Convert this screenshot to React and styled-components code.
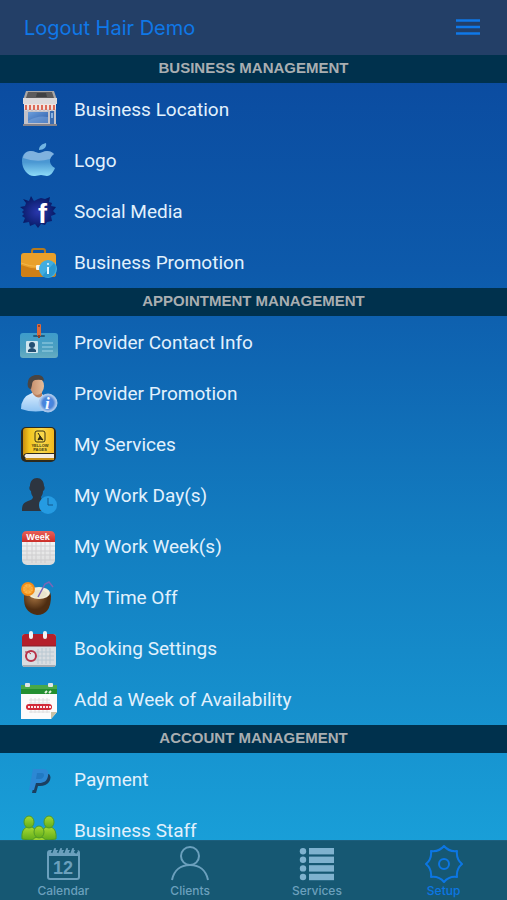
import React from "react";
import styled, { createGlobalStyle } from "styled-components";

const GlobalStyle = createGlobalStyle`
  * {
    box-sizing: border-box;
  }

  body {
    margin: 0;
    font-family: Inter, "Liberation Sans", sans-serif;
  }
`;

const Screen = styled.div`
  display: flex;
  flex-direction: column;
  height: 100vh;
  background: linear-gradient(#0a469c, #0d5aab 30%, #1380c2 62%, #199fd8 94%);
`;

const Header = styled.header`
  display: flex;
  align-items: center;
  justify-content: space-between;
  flex-shrink: 0;
  height: 55px;
  padding: 0 24px;
  background-color: #233f67;
`;

const HeaderButton = styled.button`
  display: flex;
  padding: 0;
  border: none;
  background: none;
  color: #0f78e8;
  font-family: inherit;
  font-size: 20px;
  line-height: 24px;
  cursor: pointer;
`;

const MenuIcon = styled.svg`
  width: 30px;
  height: 24px;
`;

const Main = styled.main`
  flex: 1;
  min-height: 0;
  overflow-y: auto;
  scrollbar-width: none;
`;

const SectionTitle = styled.h2`
  margin: 0;
  padding-bottom: 2px;
  background-color: #00314d;
  color: #a9aeb1;
  font-family: "Liberation Sans", sans-serif;
  font-size: 15px;
  font-weight: 700;
  line-height: 26px;
  text-align: center;
`;

const List = styled.ul`
  margin: 0;
  padding: 1px 0 0;
  list-style: none;
`;

const Row = styled.a`
  display: flex;
  align-items: center;
  gap: 16px;
  height: 51px;
  padding: 0 20px;
  color: #e2f1fd;
  font-family: Roboto, "Liberation Sans", sans-serif;
  font-size: 19px;
  line-height: 24px;
  text-decoration: none;
`;

const RowIcon = styled.svg`
  flex-shrink: 0;
  width: 38px;
  height: 38px;
`;

const TabBar = styled.nav`
  display: grid;
  grid-template-columns: repeat(4, 1fr);
  flex-shrink: 0;
  height: 60px;
  border-top: 1px solid #1c5f7e;
  background-color: #165873;
`;

const Tab = styled.a`
  display: flex;
  flex-direction: column;
  align-items: center;
  padding-top: 4px;
  color: ${(props) => (props.$active ? "#0c76e4" : "#6ba0bd")};
  font-size: 12px;
  font-weight: 500;
  line-height: 14px;
  text-decoration: none;
`;

const TabIcon = styled.svg`
  width: 38px;
  height: 38px;
  margin-bottom: 1px;
`;

const StoreIcon = () => (
  <RowIcon viewBox="0 0 38 38" aria-hidden="true">
    <defs>
      <linearGradient id="glass" x1="0" y1="0" x2="1" y2="1">
        <stop offset="0" stopColor="#6c9fdc" />
        <stop offset="1" stopColor="#2a5aa8" />
      </linearGradient>
    </defs>
    <path d="M6 0h28l3 9H3z" fill="#a9a6a6" />
    <path d="M8 1h24l2 6H6z" fill="#5c5b5d" />
    <path d="M17 2h9l1 4H16z" fill="#3f4043" />
    <path d="M3 7h34v6H3z" fill="#dcd9db" />
    <path d="M4 13h32v22H4z" fill="#c3c2c9" />
    <path d="M8 21h20v11H8z" fill="url(#glass)" />
    <path d="M8 30q9-6 20-4v6H8z" fill="#7ea9df" opacity=".5" />
    <path d="M30 20h4v14h-4z" fill="#3a6cb0" />
    <path d="M31 22h2v5h-2z" fill="#87b2e2" />
    <path d="M4 13h32v5l-2 2-2-2-2 2-2-2-2 2-2-2-2 2-2-2-2 2-2-2-2 2-2-2-2 2-2-2-2 2-2-2z" fill="#f1e3df" />
    <path d="M6 14v5M10 14v5M14 14v5M18 14v5M22 14v5M26 14v5M30 14v5M34 14v5" stroke="#dc6a58" strokeWidth="2" />
    <path d="M3 33h34v2H3z" fill="#85838b" />
  </RowIcon>
);

const AppleIcon = () => (
  <RowIcon viewBox="0 0 38 38" aria-hidden="true">
    <defs>
      <linearGradient id="apple" x1="0" y1="0" x2="0" y2="1">
        <stop offset="0" stopColor="#4d91cf" />
        <stop offset=".45" stopColor="#4b98d3" />
        <stop offset="1" stopColor="#8edcf8" />
      </linearGradient>
    </defs>
    <path
      d="M19 11c3 0 5-2 8-2 3 0 5 1 7 3-6 4-5 11 1 14-2 5-5 8-8 8-2 0-4-1-6-1s-4 1-6 1C9 35 2 28 2 19 2 12 6 9 11 9c3 0 6 2 8 2z"
      fill="url(#apple)"
    />
    <path d="M3 16c1-5 4-7 8-7 3 0 6 2 8 2s5-2 8-2 5 1 7 3q-3 2-4 5-13 4-27-1z" fill="#9bc2e6" opacity=".65" />
    <path d="M19 8c0-4 3-6 7-7 1 4-2 7-7 7z" fill="#72b5e3" />
  </RowIcon>
);

const FacebookIcon = () => (
  <RowIcon viewBox="0 0 38 38" aria-hidden="true">
    <defs>
      <radialGradient id="splash">
        <stop offset="0" stopColor="#2a37ad" />
        <stop offset="1" stopColor="#071b66" />
      </radialGradient>
    </defs>
    <path
      d="M11 3l3 5 4-2 3-1 4 1 5-2-1 5 3 1-1 3 5 1-3 4 3 3-5 2 1 5-5 1-2 3-4-1-3 4-3-4-5 2-1-4-6 1 2-5-3-2 2-2-2-2 2-2-4-3 5-1 1-3-3-4 6 2z"
      fill="url(#splash)"
    />
    <text x="18" y="30" fill="#fff" fontFamily="Liberation Sans, sans-serif" fontSize="27" fontWeight="700">
      f
    </text>
  </RowIcon>
);

const BriefcaseIcon = () => (
  <RowIcon viewBox="0 0 38 38" aria-hidden="true">
    <path d="M12 10V7q0-2 2-2h9q2 0 2 2v3" fill="none" stroke="#b67a1d" strokeWidth="2" />
    <rect x="1" y="9" width="35" height="24" rx="3" fill="#e9a02a" />
    <path d="M1 21q17 7 35 0v9q0 3-3 3H4q-3 0-3-3z" fill="#cf7f16" />
    <path d="M1 19q17 7 35 0" stroke="#f5b648" fill="none" />
    <rect x="16" y="21" width="6" height="5" rx="1" fill="#f7f4ea" />
    <circle cx="28" cy="25" r="9" fill="#41ade0" />
    <path d="M22 32a9 9 0 0 0 12-13z" fill="#2b98d1" />
    <path d="M28 23v7" stroke="#e7f6ff" strokeWidth="2" />
    <circle cx="28" cy="20" r="1" fill="#e7f6ff" />
  </RowIcon>
);

const BadgeIcon = () => (
  <RowIcon viewBox="0 0 38 38" aria-hidden="true">
    <defs>
      <linearGradient id="badge" x1="0" y1="0" x2="0" y2="1">
        <stop offset="0" stopColor="#3d9ccb" />
        <stop offset=".6" stopColor="#4c9fc0" />
        <stop offset="1" stopColor="#67adc2" />
      </linearGradient>
    </defs>
    <rect x="0" y="9" width="38" height="25" rx="3" fill="url(#badge)" />
    <rect x="13" y="11" width="12" height="2" rx="1" fill="#1d5d83" />
    <rect x="17" y="0" width="4" height="12" rx="1" fill="#dc6a3b" />
    <circle cx="19" cy="2" r="1" fill="#7c3a2b" />
    <path d="M18 11h2v3h-2z" fill="#8c3d25" />
    <rect x="6" y="17" width="12" height="12" rx="1" fill="#cfe5ef" />
    <circle cx="12" cy="21" r="3" fill="#234e72" />
    <path d="M8 28v-2q4-4 8 0v2z" fill="#234e72" />
    <path d="M22 19h11M22 23h11M22 27h11" stroke="#9fd3e6" strokeWidth="1" />
  </RowIcon>
);

const PersonInfoIcon = () => (
  <RowIcon viewBox="0 0 38 38" aria-hidden="true">
    <defs>
      <linearGradient id="shirt" x1="0" y1="0" x2="0" y2="1">
        <stop offset="0" stopColor="#d9ecfd" />
        <stop offset="1" stopColor="#8fc3f3" />
      </linearGradient>
      <linearGradient id="face">
        <stop offset="0" stopColor="#c58e6b" />
        <stop offset="1" stopColor="#e6bd9a" />
      </linearGradient>
      <radialGradient id="info">
        <stop offset="0" stopColor="#3f85ee" />
        <stop offset=".6" stopColor="#4c85d8" />
        <stop offset="1" stopColor="#c5d9f2" />
      </radialGradient>
    </defs>
    <path d="M1 34q0-12 11-16h8q10 4 10 16-14 5-29 0z" fill="url(#shirt)" />
    <path d="M12 15h10v6q-4 4-9-2z" fill="#b77f5e" />
    <ellipse cx="17" cy="11" rx="7" ry="9" fill="url(#face)" />
    <path d="M8 12Q6 2 15 0q9-1 9 6-3-2-9-1-3 1-3 5l-1 4q-2 0-3-2z" fill="#4a4542" />
    <circle cx="28" cy="28" r="9" fill="url(#info)" stroke="#a9c7ec" />
    <text x="25" y="34" fill="#f3f9ff" fontFamily="Liberation Serif, serif" fontSize="17" fontStyle="italic" fontWeight="700">
      i
    </text>
  </RowIcon>
);

const YellowPagesIcon = () => (
  <RowIcon viewBox="0 0 38 38" aria-hidden="true">
    <defs>
      <linearGradient id="book">
        <stop offset="0" stopColor="#c98f10" />
        <stop offset=".2" stopColor="#f3c51e" />
        <stop offset=".6" stopColor="#f8d94e" />
        <stop offset="1" stopColor="#f3b91c" />
      </linearGradient>
    </defs>
    <rect x="1" y="1" width="35" height="35" rx="5" fill="#2d2a1e" />
    <path d="M3 5q0-3 3-3h25q3 0 3 3v22H8q-4 0-5 3z" fill="url(#book)" />
    <path d="M6 28h28v4H6q-3-2 0-4z" fill="#f3ece0" />
    <path d="M5 32h29v2H6z" fill="#c48d13" />
    <rect x="15" y="5" width="10" height="11" rx="2" fill="none" stroke="#3c3412" strokeWidth="1" />
    <path d="M18 7l2 3 3 4-3-1-2 1 2-4" stroke="#2b250f" strokeWidth="1" fill="#2b250f" />
    <text x="20" y="21" fill="#45390c" fontFamily="Liberation Sans, sans-serif" fontSize="4" fontWeight="700" textAnchor="middle">
      YELLOW
    </text>
    <text x="20" y="25" fill="#45390c" fontFamily="Liberation Sans, sans-serif" fontSize="4" fontWeight="700" textAnchor="middle">
      PAGES
    </text>
  </RowIcon>
);

const WorkDayIcon = () => (
  <RowIcon viewBox="0 0 38 38" aria-hidden="true">
    <path
      d="M10 9c0-5 3-8 7-8s7 3 7 8c1 1 1 4-1 5 0 3-1 4-2 6 0 2 2 3 5 4 4 2 5 4 5 10H2c0-6 1-8 6-10 3-1 5-2 5-4-1-2-2-3-2-6-2-1-2-4-1-5z"
      fill="#2d3540"
    />
    <circle cx="28" cy="28" r="9" fill="#259be2" />
    <path d="M28 21v7h5" fill="none" stroke="#15568a" strokeWidth="1" />
  </RowIcon>
);

const WeekIcon = () => (
  <RowIcon viewBox="0 0 38 38" aria-hidden="true">
    <defs>
      <linearGradient id="page" x1="0" y1="0" x2="0" y2="1">
        <stop offset="0" stopColor="#fff" />
        <stop offset="1" stopColor="#dadada" />
      </linearGradient>
      <linearGradient id="weekTop" x1="0" y1="0" x2="0" y2="1">
        <stop offset="0" stopColor="#ea6059" />
        <stop offset="1" stopColor="#cb2f29" />
      </linearGradient>
    </defs>
    <rect x="2" y="4" width="33" height="33" rx="5" fill="url(#page)" />
    <path d="M2 14V8q0-5 5-5h23q5 0 5 5v6z" fill="url(#weekTop)" />
    <path
      d="M7 14v18M12 14v21M16 14v21M21 14v21M25 14v21M30 14v18M2 18h33M2 23h33M2 27h33M2 32h33"
      stroke="#c6c5c7"
      strokeWidth="1"
      opacity=".7"
    />
    <text x="18" y="12" fill="#fff" fontFamily="Liberation Sans, sans-serif" fontSize="9" fontWeight="700" textAnchor="middle">
      Week
    </text>
  </RowIcon>
);

const CoconutIcon = () => (
  <RowIcon viewBox="0 0 38 38" aria-hidden="true">
    <defs>
      <radialGradient id="coconut" cx=".4" cy=".3">
        <stop offset="0" stopColor="#a87542" />
        <stop offset="1" stopColor="#4e2d12" />
      </radialGradient>
    </defs>
    <path d="M4 17q2-7 14-8 12 0 13 8 0 19-14 19Q3 34 4 17z" fill="url(#coconut)" />
    <ellipse cx="19" cy="14" rx="11" ry="6" fill="#f4efd9" />
    <ellipse cx="19" cy="15" rx="8" ry="4" fill="#e9e4cd" />
    <path d="M18 18l7-13 4-2 4 5" fill="none" stroke="#7c66b6" strokeWidth="1.5" />
    <circle cx="8" cy="10" r="7" fill="#f38c17" />
    <circle cx="8" cy="10" r="5" fill="#fcb447" />
    <path d="M8 5v10M3 10h10M4 7l8 6M12 7l-8 6" stroke="#f7a02e" />
  </RowIcon>
);

const BookingIcon = () => (
  <RowIcon viewBox="0 0 38 38" aria-hidden="true">
    <rect x="2" y="4" width="34" height="33" rx="3" fill="#d9dde1" />
    <path d="M2 16V7q0-3 3-3h28q3 0 3 3v9z" fill="#b4202b" />
    <path d="M2 16h34" stroke="#84202a" />
    <rect x="9" y="1" width="4" height="8" rx="2" fill="#f0f2f4" />
    <rect x="23" y="1" width="4" height="8" rx="2" fill="#f0f2f4" />
    <path d="M18 19v15M22 18v16M26 18v16M30 18v16M5 22h29M5 26h29M5 30h29" stroke="#b9c8d2" strokeWidth="1" />
    <circle cx="11" cy="26" r="5" fill="#dfe2e6" stroke="#b73248" strokeWidth="2" />
    <path d="M5 22q4-1 6 2" stroke="#b73248" fill="none" />
    <path d="M3 36h32" stroke="#a6adb5" strokeWidth="2" />
  </RowIcon>
);

const AddWeekIcon = () => (
  <RowIcon viewBox="0 0 38 38" aria-hidden="true">
    <path d="M1 4h36v27l-6 7H1z" fill="#fbfbfb" />
    <path d="M1 4h36v9H1z" fill="#238f30" />
    <path d="M1 4h36v4H1z" fill="#48a84a" />
    <rect x="5" y="2" width="5" height="4" rx="1" fill="#e0e5e6" />
    <rect x="28" y="2" width="5" height="4" rx="1" fill="#e0e5e6" />
    <path d="M25 12l2-2M29 12l2-2" stroke="#e4f3df" strokeWidth="2" />
    <path d="M11 17v15M15 17v15M19 17v15M23 17v15M27 17v15M9 19h21M9 22h21M9 31h21" stroke="#dedede" />
    <rect x="6" y="23" width="26" height="6" rx="3" fill="#d22a38" />
    <path d="M8 26h23" stroke="#fbe7e8" strokeWidth="2" strokeDasharray="2 1" />
    <path d="M31 38v-7h6z" fill="#c7c1a6" />
  </RowIcon>
);

const PaypalIcon = () => (
  <RowIcon viewBox="0 0 38 38" aria-hidden="true">
    <path d="M16 13h13q3 3 0 8-3 4-9 4h-2l-2 7h-4z" fill="#1b3f60" />
    <path d="M13 8h10c5 0 6 3 5 7-1 5-4 7-9 7h-3l-2 7H9z" fill="#2c88d4" />
    <path d="M17 12h4c3 0 3 1 3 3-1 2-2 3-4 3h-4z" fill="#2179c2" />
  </RowIcon>
);

const StaffIcon = () => (
  <RowIcon viewBox="0 0 38 38" aria-hidden="true">
    <defs>
      <linearGradient id="staff" x1="0" y1="0" x2="0" y2="1">
        <stop offset="0" stopColor="#a7da33" />
        <stop offset="1" stopColor="#5fac1a" />
      </linearGradient>
    </defs>
    <g fill="url(#staff)" stroke="#4f9a26" strokeWidth="1">
      <path d="M2 27q-1-10 5-12h5q5 2 5 12-8 2-15 0z" />
      <ellipse cx="9" cy="10" rx="5" ry="6" />
      <path d="M21 27q0-10 5-12h5q6 2 5 12-7 2-15 0z" />
      <ellipse cx="29" cy="10" rx="5" ry="6" />
      <path d="M11 38q-1-12 6-13h4q7 1 6 13z" />
      <ellipse cx="19" cy="20" rx="5" ry="6" />
    </g>
  </RowIcon>
);

const CalendarTabIcon = () => (
  <TabIcon viewBox="0 0 38 38" aria-hidden="true">
    <rect x="4" y="6" width="31" height="28" rx="2" fill="none" stroke="currentColor" strokeWidth="2" />
    <path d="M4 6h31v5H4z" fill="currentColor" />
    <path d="M8 8l2-3M14 8l2-3M20 8l2-3M26 8l2-3M31 8l2-3" stroke="#165873" strokeWidth="3" />
    <path d="M9 9l2-5M15 9l2-5M21 9l2-5M27 9l2-5" stroke="currentColor" strokeWidth="2" strokeLinecap="round" />
    <text x="19" y="29" fill="currentColor" fontFamily="Liberation Sans, sans-serif" fontSize="18" fontWeight="700" textAnchor="middle">
      12
    </text>
  </TabIcon>
);

const ClientsTabIcon = () => (
  <TabIcon viewBox="0 0 38 38" aria-hidden="true">
    <g fill="none" stroke="currentColor" strokeWidth="2">
      <circle cx="19" cy="11" r="9" />
      <path d="M1 35c2-10 9-15 18-15s16 5 18 15" />
    </g>
  </TabIcon>
);

const ServicesTabIcon = () => (
  <TabIcon viewBox="0 0 38 38" aria-hidden="true">
    <g fill="#7fb2cf">
      {[3, 11.6, 20.2, 28.8].map((y) => (
        <React.Fragment key={y}>
          <circle cx="5" cy={y + 3.2} r="3.2" />
          <rect x="11" y={y} width="25" height="6.4" />
        </React.Fragment>
      ))}
    </g>
  </TabIcon>
);

const SetupTabIcon = () => (
  <TabIcon viewBox="0 0 38 38" aria-hidden="true">
    <g fill="none" stroke="currentColor" strokeWidth="2" strokeLinejoin="round">
      <path d="M19 1Q24 7 32 6 31 14 37 19 31 24 32 32 24 31 19 37 14 31 6 32 7 24 1 19 7 14 6 6 14 7 19 1z" />
      <circle cx="19" cy="19" r="5" />
    </g>
  </TabIcon>
);

const sections = [
  {
    title: "BUSINESS MANAGEMENT",
    items: [
      { label: "Business Location", Icon: StoreIcon },
      { label: "Logo", Icon: AppleIcon },
      { label: "Social Media", Icon: FacebookIcon },
      { label: "Business Promotion", Icon: BriefcaseIcon },
    ],
  },
  {
    title: "APPOINTMENT MANAGEMENT",
    items: [
      { label: "Provider Contact Info", Icon: BadgeIcon },
      { label: "Provider Promotion", Icon: PersonInfoIcon },
      { label: "My Services", Icon: YellowPagesIcon },
      { label: "My Work Day(s)", Icon: WorkDayIcon },
      { label: "My Work Week(s)", Icon: WeekIcon },
      { label: "My Time Off", Icon: CoconutIcon },
      { label: "Booking Settings", Icon: BookingIcon },
      { label: "Add a Week of Availability", Icon: AddWeekIcon },
    ],
  },
  {
    title: "ACCOUNT MANAGEMENT",
    items: [
      { label: "Payment", Icon: PaypalIcon },
      { label: "Business Staff", Icon: StaffIcon },
    ],
  },
];

const tabs = [
  { label: "Calendar", Icon: CalendarTabIcon },
  { label: "Clients", Icon: ClientsTabIcon },
  { label: "Services", Icon: ServicesTabIcon },
  { label: "Setup", Icon: SetupTabIcon, active: true },
];

const App = () => {
  return (
    <Screen>
      <GlobalStyle />
      <Header>
        <HeaderButton type="button">Logout Hair Demo</HeaderButton>
        <HeaderButton type="button" aria-label="Menu">
          <MenuIcon viewBox="0 0 30 24" aria-hidden="true">
            <path d="M3 4.5h24M3 11h24M3 17.5h24" stroke="currentColor" strokeWidth="2.5" />
          </MenuIcon>
        </HeaderButton>
      </Header>
      <Main>
        {sections.map((section) => (
          <section key={section.title}>
            <SectionTitle>{section.title}</SectionTitle>
            <List>
              {section.items.map(({ label, Icon }) => (
                <li key={label}>
                  <Row href="#">
                    <Icon />
                    <span>{label}</span>
                  </Row>
                </li>
              ))}
            </List>
          </section>
        ))}
      </Main>
      <TabBar>
        {tabs.map(({ label, Icon, active }) => (
          <Tab key={label} href="#" $active={active} aria-current={active ? "page" : undefined}>
            <Icon />
            {label}
          </Tab>
        ))}
      </TabBar>
    </Screen>
  );
};

export default App;
